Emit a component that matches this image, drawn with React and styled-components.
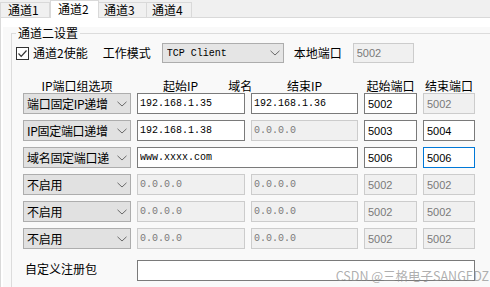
import React from 'react';
import styled, { createGlobalStyle } from 'styled-components';

const Global = createGlobalStyle`
  html, body {
    margin: 0;
    background: #f0f0f0;
  }
  body {
    font-family: "Noto Sans CJK SC", "Liberation Sans", sans-serif;
    font-size: 12px;
    color: #000;
  }
`;

const CJK = '"Noto Sans CJK SC", "Liberation Sans", sans-serif';

const Page = styled.div`
  position: relative;
  width: 490px;
  height: 287px;
  overflow: hidden;
  display: flex;
  flex-direction: column;
`;

// 탭 영역
const TabStrip = styled.div`
  display: flex;
  align-items: flex-end;
  height: 17px;
  position: relative;
  z-index: 1;
`;

const Tab = styled.div`
  box-sizing: border-box;
  width: ${(p) => p.$w}px;
  height: ${(p) => (p.$active ? 18 : 15)}px;
  margin-bottom: ${(p) => (p.$active ? -1 : 0)}px;
  margin-left: ${(p) => (p.$first || p.$active ? 0 : -1)}px;
  padding-left: ${(p) => p.$pl || 7}px;
  border: 1px solid #d9d9d9;
  border-bottom: none;
  background: ${(p) => (p.$active ? '#ffffff' : '#f0f0f0')};
  font-family: ${CJK};
  font-size: 12px;
  line-height: ${(p) => (p.$active ? 15 : 13)}px;
  white-space: nowrap;
`;

const Panel = styled.div`
  flex: 1;
  display: flex;
  border-top: 1px solid #d9d9d9;
  border-left: 1px solid #d9d9d9;
  background: #ffffff;
  padding: 9px 0 0 2px;
`;

const Inner = styled.div`
  flex: 1;
  background: #f9f9f9;
  padding-left: 8px;
`;

const GroupBox = styled.fieldset`
  margin: 0 -12px 0 0;
  padding: 4px 0 0 4px;
  border: 1px solid #dcdcdc;
  min-width: 0;
  height: 290px;
`;

const Legend = styled.legend`
  padding: 0 2px;
  font-family: ${CJK};
  font-size: 12px;
  line-height: 12px;
`;

const TopRow = styled.div`
  display: flex;
  align-items: center;
  height: 20px;
`;

const Check = styled.span`
  box-sizing: border-box;
  width: 13px;
  height: 13px;
  border: 1px solid #333;
  background: #fff;
  display: flex;
  align-items: center;
  justify-content: center;
`;

const Label = styled.span`
  margin-left: ${(p) => p.$ml || 0}px;
  font-family: ${CJK};
  font-size: 12px;
  line-height: 14px;
  white-space: nowrap;
`;

const Combo = styled.div`
  box-sizing: border-box;
  width: ${(p) => (p.$w ? `${p.$w}px` : '100%')};
  height: ${(p) => p.$h || 21}px;
  margin-left: ${(p) => p.$ml || 0}px;
  display: flex;
  align-items: center;
  gap: 1px;
  padding: 0 3px 0 ${(p) => p.$pl || 3}px;
  background: ${(p) => p.$bg || '#e1e1e1'};
  border: 1px solid #adadad;
  overflow: hidden;

  svg {
    flex: none;
  }
`;

const ComboText = styled.span`
  flex: 1;
  min-width: 0;
  font-family: ${(p) => (p.$mono ? '"Liberation Mono", monospace' : CJK)};
  font-size: ${(p) => (p.$mono ? 10 : 12)}px;
  letter-spacing: ${(p) => (p.$mono ? 0 : -0.3)}px;
  white-space: nowrap;
  overflow: hidden;
`;

const Field = styled.input`
  box-sizing: border-box;
  width: ${(p) => (p.$w ? `${p.$w}px` : '100%')};
  height: ${(p) => p.$h || 21}px;
  margin: 0 0 0 ${(p) => p.$ml || 0}px;
  padding: 0 0 0 ${(p) => (p.$mono ? 2 : 3)}px;
  grid-column: ${(p) => p.$span || 'auto'};
  border: 1px solid ${(p) => (p.$focus ? '#0078d7' : '#7a7a7a')};
  background: #fff;
  color: #000;
  font-family: ${(p) => (p.$mono ? '"Liberation Mono", monospace' : '"Liberation Sans", sans-serif')};
  font-size: ${(p) => (p.$mono ? 10 : 11)}px;
  outline: none;

  &:disabled {
    background: #f0f0f0;
    border-color: #cccccc;
    color: #7a7a7a;
  }
`;

const Header = styled.div`
  display: grid;
  grid-template-columns: 108px 108px 107px 53px 52px;
  column-gap: 6px;
  margin: 16px 0 0 7px;
  height: 14px;
`;

const HeadCell = styled.div`
  display: flex;
  justify-content: ${(p) => (p.$left ? 'flex-start' : 'center')};
  padding-left: ${(p) => p.$pl || 0}px;
  white-space: nowrap;
  font-family: ${CJK};
  font-size: 12px;
  line-height: 14px;
`;

const Grid = styled.div`
  display: grid;
  grid-template-columns: 108px 108px 107px 53px 52px;
  grid-auto-rows: 21px;
  column-gap: 6px;
  row-gap: 6px;
  margin-left: 7px;
`;

const RowLabel = styled.div`
  display: flex;
  align-items: center;
  padding-left: 2px;
  margin-top: 5px;
  font-family: ${CJK};
  font-size: 12px;
`;

const Watermark = styled.div`
  position: absolute;
  right: 1px;
  bottom: 5px;
  font-family: ${CJK};
  font-size: 12.5px;
  line-height: 13px;
  color: rgba(140, 140, 140, 0.7);
  white-space: nowrap;
`;

const Chevron = () => (
  <svg width="10" height="6" viewBox="0 0 10 6">
    <path d="M0.5 0.8 L5 5 L9.5 0.8" fill="none" stroke="#6a6a6a" strokeWidth="1" />
  </svg>
);

const CheckMark = () => (
  <svg width="11" height="11" viewBox="0 0 11 11">
    <path d="M1.5 5.5 L4.2 8.3 L9.5 2.5" fill="none" stroke="#333" strokeWidth="1.2" />
  </svg>
);

const rows = [
  { mode: '端口固定IP递增', start: '192.168.1.35', end: '192.168.1.36', endOn: true, p1: '5002', p2: '5002', p2On: false },
  { mode: 'IP固定端口递增', start: '192.168.1.38', end: '0.0.0.0', endOn: false, p1: '5003', p2: '5004', p2On: true },
  { mode: '域名固定端口递', domain: 'www.xxxx.com', p1: '5006', p2: '5006', p2On: true, focus: true },
  { mode: '不启用', off: true },
  { mode: '不启用', off: true },
  { mode: '不启用', off: true },
];

function Row({ r }) {
  if (r.off) {
    return (
      <>
        <Combo>
          <ComboText>{r.mode}</ComboText>
          <Chevron />
        </Combo>
        <Field disabled readOnly value="0.0.0.0" $mono />
        <Field disabled readOnly value="0.0.0.0" $mono />
        <Field disabled readOnly value="5002" />
        <Field disabled readOnly value="5002" />
      </>
    );
  }
  return (
    <>
      <Combo>
        <ComboText>{r.mode}</ComboText>
        <Chevron />
      </Combo>
      {r.domain ? (
        <Field readOnly value={r.domain} $mono $span="span 2" />
      ) : (
        <>
          <Field readOnly value={r.start} $mono />
          <Field readOnly disabled={!r.endOn} value={r.end} $mono />
        </>
      )}
      <Field readOnly value={r.p1} />
      <Field readOnly disabled={!r.p2On} value={r.p2} $focus={r.focus} />
    </>
  );
}

export default function App() {
  return (
    <Page>
      <Global />
      <TabStrip>
        <Tab $w={50} $first>通道1</Tab>
        <Tab $w={49} $active>通道2</Tab>
        <Tab $w={49} $pl={5}>通道3</Tab>
        <Tab $w={46} $pl={5}>通道4</Tab>
      </TabStrip>
      <Panel>
        <Inner>
          <GroupBox>
            <Legend>通道二设置</Legend>
            <TopRow>
              <Check>
                <CheckMark />
              </Check>
              <Label $ml={4}>通道2使能</Label>
              <Label $ml={15}>工作模式</Label>
              <Combo $w={122} $h={20} $ml={11} $pl={4} $bg="#e5e5e5">
                <ComboText $mono>TCP Client</ComboText>
                <Chevron />
              </Combo>
              <Label $ml={10}>本地端口</Label>
              <Field disabled readOnly value="5002" $w={61} $h={20} $ml={11} />
            </TopRow>
            <Header>
              <HeadCell>IP端口组选项</HeadCell>
              <HeadCell $left $pl={26}>
                起始IP
                <span style={{ marginLeft: 30 }}>域名</span>
              </HeadCell>
              <HeadCell>结束IP</HeadCell>
              <HeadCell>起始端口</HeadCell>
              <HeadCell>结束端口</HeadCell>
            </Header>
            <Grid>
              {rows.map((r, i) => (
                <Row key={i} r={r} />
              ))}
              <RowLabel>自定义注册包</RowLabel>
              <Field readOnly value="" $span="span 4" style={{ marginTop: 5 }} />
            </Grid>
          </GroupBox>
        </Inner>
      </Panel>
      <Watermark>CSDN @三格电子SANGEDZ</Watermark>
    </Page>
  );
}
